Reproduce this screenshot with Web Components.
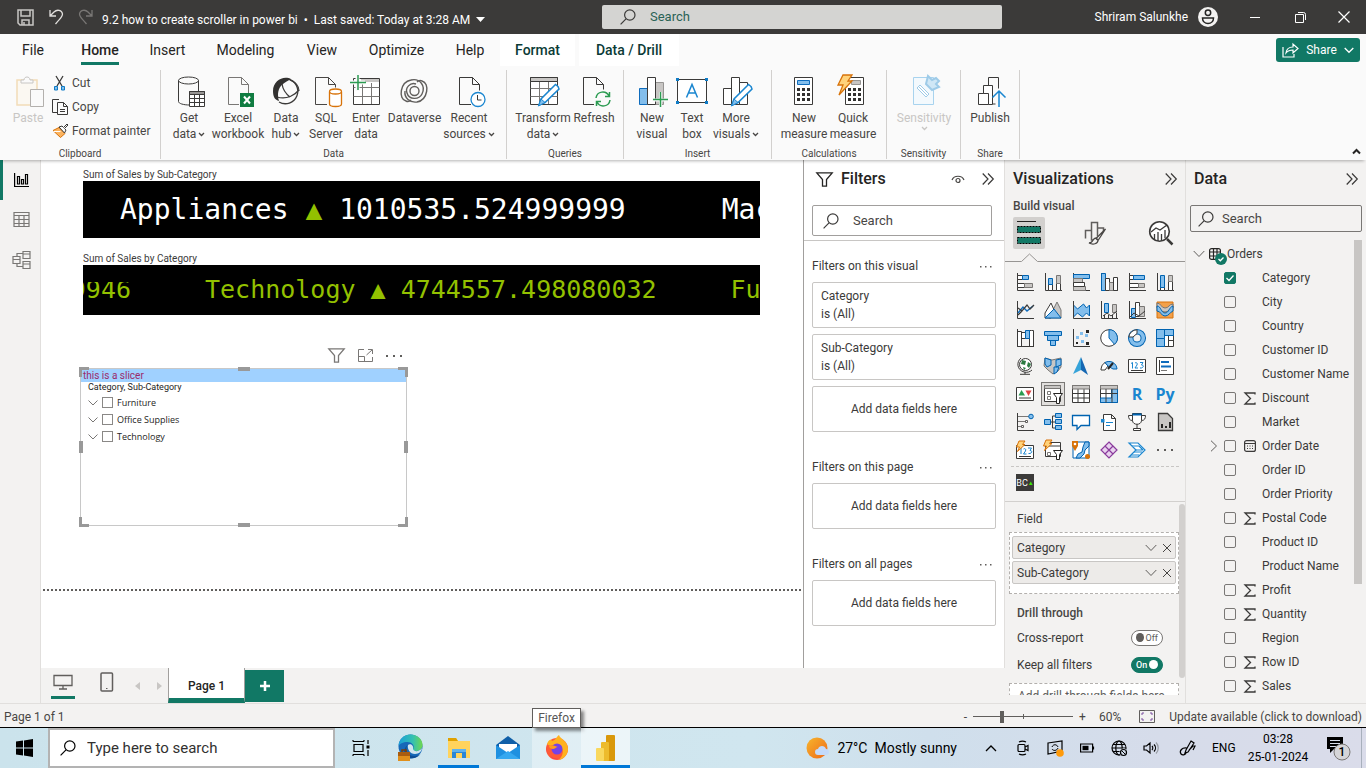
<!DOCTYPE html>
<html lang="en">
<head>
<meta charset="utf-8">
<title>9.2 how to create scroller in power bi</title>
<style>
  html, body { margin: 0; height: 100%; }
  body { font: 12px/16px Roboto, "Segoe UI", sans-serif; color: #3b3a39; background: #f3f2f1; overflow: hidden; }
</style>
</head>
<body>
<pbi-app></pbi-app>
<script>
/* ---------- helpers ---------- */
const BASE = `*{box-sizing:border-box} button{display:flex;align-items:center;font:inherit;color:inherit;background:none;border:0;padding:0;margin:0;cursor:default}
input{font:inherit;color:inherit;margin:0} a{color:inherit;text-decoration:none} [hidden]{display:none}`;
function define(tag, css, html) {
  customElements.define(tag, class extends HTMLElement {
    connectedCallback() {
      if (this.shadowRoot) return;
      const t = document.createElement('template');
      t.innerHTML = `<style>${BASE}${css}</style>` + (typeof html === 'function' ? html(this) : html);
      this.attachShadow({ mode: 'open' }).append(t.content.cloneNode(true));
    }
  });
}
const attr = (el, n, d = '') => el.getAttribute(n) ?? d;

/* ---------- icons: [width, height, markup] ---------- */
const AX = '<path class="d" d="M1.5 0V17.5H18"/>';
const BOLT = '<path d="M3 0h6L6.500 3.500H9L1.500 10.500L3.500 6H.5z" fill="#ffd27a" stroke="#d8730a"/>';
const PENCIL = '<path d="M31 10.500l-2.500-2L14 23l-2 6 6-2.500L32 13z" fill="#fff" stroke="#1a86d0" stroke-width="1.500"/><path d="M14 23l-2.500 7L18 26.500z" fill="#83beec" stroke="#1a86d0"/>';
const ICONS = {
  save: [17, 17, '<g fill="none" stroke="#c8c6c4" stroke-width="1.500"><path d="M1 1h15v15H3L1 14z"/><path d="M4 1v6h9V1M5 16v-5h7v5M7 16v-3"/></g>'],
  undo: [16, 17, '<path d="M2 1v6h6M2 7L6 3C9 0 14 1 14.500 5c0 3-2 4-7 10" fill="none" stroke="#e1dfdd" stroke-width="1.300"/>'],
  redo: [16, 17, '<path d="M14 1v6H8M14 7l-4-4C7 0 2 1 1.500 5c0 3 2 4 7 10" fill="none" stroke="#797775" stroke-width="1.300"/>'],
  caretw: [9, 6, '<path d="M0 0h9L4.500 5z" fill="#fff"/>'],
  mag: [16, 16, '<g fill="none" stroke="currentColor" stroke-width="1.200"><circle cx="9.800" cy="6" r="5.200"/><path d="M6 9.800L.6 15.300"/></g>'],
  user: [20, 20, '<circle cx="10" cy="10" r="10" fill="#f3f2f1"/><g fill="none" stroke="#252423" stroke-width="1.500"><circle cx="10" cy="5.800" r="2.700"/><path d="M4.500 11h11c0 3.500-2.500 5.500-5.500 5.500S4.500 14.500 4.500 11z"/></g>'],
  min: [11, 11, '<path d="M0 5.500h10" stroke="#fff"/>'],
  max: [11, 11, '<g fill="none" stroke="#fff"><path d="M.5 2.500h8v8h-8z"/><path d="M3 .5h5.500a2 2 0 0 1 2 2V8"/></g>'],
  close: [12, 12, '<path d="M.5.5l11 11M11.500.5l-11 11" stroke="#fff" stroke-width="1.200"/>'],
  share: [17, 15, '<g fill="none" stroke="#fff" stroke-width="1.200"><path d="M1 4v10h11v-3"/><path d="M4 10c.5-4 3-6 7-6V1l5 4.500-5 4.500V7c-3 0-5 .5-7 3z"/></g>'],
  chevw: [10, 7, '<path d="M.7 1L5 5.300 9.300 1" fill="none" stroke="#fff" stroke-width="1.300"/>'],
  chev: [7, 5, '<path d="M1 1l2.500 2.500L6 1" fill="none" stroke="currentColor" stroke-width="1.300"/>'],
  up: [9, 7, '<path d="M1 5.500L4.500 2 8 5.500" fill="none" stroke="#252423" stroke-width="2"/>'],
  chevl: [12, 8, '<path d="M.7 1L6 6.500 11.300 1" fill="none" stroke="#605e5c"/>'],
  chevr: [8, 12, '<path d="M1 .7L6.500 6 1 11.300" fill="none" stroke="#605e5c"/>'],
  chevs: [10, 6, '<path d="M.5.5L5 5 9.500.5" fill="none" stroke="#797775"/>'],
  dbl: [12, 12, '<path d="M.7.5L6 6 .7 11.500M6 .5L11.300 6 6 11.500" fill="none" stroke="#3b3a39" stroke-width="1.200"/>'],
  x: [10, 10, '<path d="M1 1l8 8M9 1L1 9" stroke="#484644"/>'],
  dots: [12, 3, '<g fill="#605e5c"><rect y="1" width="1.500" height="1.500"/><rect x="5" y="1" width="1.500" height="1.500"/><rect x="10" y="1" width="1.500" height="1.500"/></g>'],
  dots2: [16, 4, '<g fill="#605e5c"><rect y="1" width="2" height="2"/><rect x="7" y="1" width="2" height="2"/><rect x="14" y="1" width="2" height="2"/></g>'],
  /* ribbon */
  paste: [32, 32, '<path d="M5 4h20v25H5z" fill="#fbf8f2" stroke="#f2dcb8" stroke-width="1.500"/><path d="M9 7V4h3c0-4 6-4 6 0h3v3z" fill="#fafafa" stroke="#c8c6c4"/><path d="M18.500 13.500h13v17h-13z" fill="#fafafa" stroke="#b3b0ad"/>'],
  cut: [14, 16, '<path d="M3 1l6 10M10 1L4 11" stroke="#3b3a39" stroke-width="1.300" fill="none"/><path d="M1.500 11.500h3v3.500h-3zM8.500 11.500h3v3.500h-3z" fill="#83beec" stroke="#0f7bc5"/>'],
  copy: [16, 16, '<g fill="none" stroke="#3b3a39"><path d="M6 13.500H.5V.5H7"/><path d="M5.500 3.500h6l4 4v8h-10zM11.500 3.500v4h4M8 10.500h5M8 12.500h5"/></g>'],
  brush: [17, 16, '<path d="M1 7.500l6-3 6 6-4.500 4z" fill="#fbb35f" stroke="#d8730a"/><path d="M7 4l3-1 1.500 1.500L15 1l1 1-3.500 3.500L14 7l-1.500 3z" fill="#fafafa" stroke="#3b3a39"/><path d="M1.500 8.500h7" stroke="#fff"/>'],
  getdata: [32, 32, '<g class="w"><path d="M5.500 4.500v21c0 2 5 3.500 11 3.500M25.500 4.500V15" fill="none"/><ellipse cx="15.500" cy="4.500" rx="10" ry="3.500" fill="none"/></g><path class="w" d="M16.500 15.500h15v15h-15z"/><path d="M16.500 15.500h15v3h-15z" fill="#979593" stroke="#3b3a39"/><path class="d" d="M16.500 22.500h15M16.500 26.500h15M21.500 19v11M26.500 19v11"/>'],
  excel: [32, 32, '<path d="M6.500 1.500h13l7 7V26M6.500 1.500v27H17M19.500 1.500v7h7" fill="none" stroke="#797775"/><path d="M18 17h14v14H18z" fill="#107c41"/><path d="M22 20.500l6 7M28 20.500l-6 7" stroke="#fff" stroke-width="2"/>'],
  hub: [32, 32, '<g fill="none" stroke="#3b3a39" stroke-width="1.300"><path d="M18 3a12.500 12.500 0 1 1-9 23"/><path d="M12 8c1 6 4 10 8 13M29 14c-4 5-12 10-22 7M20 4c5 2 9 6 9 11"/></g><path d="M21 3C14-1 3 4 3 15c0 6 2 9 6 10-2-7-1-13 4-17 2-2 5-3 8-5z" fill="#323130"/>'],
  sql: [32, 32, '<path d="M5.500 1.500h13l7 7v3M5.500 1.500v27H17M18.500 1.500v7h7" fill="none" stroke="#484644"/><g fill="#fff" stroke="#d8730a" stroke-width="1.300"><path d="M19.500 16v12c0 1.500 2.500 2.500 6 2.500s6-1 6-2.500V16"/><ellipse cx="25.500" cy="15.500" rx="6" ry="2.500"/></g>'],
  enter: [32, 32, '<path class="w" d="M3.500 2.500h26v26h-26z"/><path d="M11 3h18v3H11z" fill="#c8c6c4"/><path d="M3.500 11.500h26M3.500 20.500h26M12.500 7v21M21.500 7v21" fill="none" stroke="#797775"/><path d="M0 6.500h15M7.500 0v15" stroke="#fafafa" stroke-width="4"/><path d="M0 6.500h16M8 -1v15" stroke="#2b9b51" stroke-width="1.500"/>'],
  dataverse: [32, 32, '<g fill="none" stroke="#605e5c" stroke-width="1.400"><circle cx="15.500" cy="15" r="4.500"/><path d="M7 25c-8-2-6-19 5-21 9-2 15 6 11 14-3 6-13 6-15-1-2-5 3-11 9-9"/><path d="M23 5c8 2 6 19-5 21-7 1-13-4-12-11"/><path d="M23 5c-2-1-4 0-5 1M7 25c2 1 4 0 5-1"/></g>'],
  recent: [32, 32, '<path d="M6.500 1.500h13l7 7v6M6.500 1.500v27H18M19.500 1.500v7h7" fill="none" stroke="#3b3a39"/><circle cx="25" cy="23.500" r="7" fill="#fff" stroke="#1a86d0" stroke-width="1.300"/><path d="M24.500 19v5h4" class="d"/>'],
  transform: [32, 32, '<path class="w" d="M3.500 1.500h27v27h-27z"/><path d="M3.500 1.500h27v4h-27z" fill="#c8c6c4" stroke="#3b3a39"/><path d="M3.500 12.500h27M3.500 20.500h27M12.500 6v22M21.500 6v22" fill="none" stroke="#797775"/>' + PENCIL],
  refresh: [32, 32, '<path d="M5.500 1.500h13l7 7v5M5.500 1.500v27H16M18.500 1.500v7h7" fill="none" stroke="#3b3a39"/><g fill="none" stroke="#2b9b51" stroke-width="1.500"><path d="M18 22c1-7 10-8 13-2M32 24c-1 7-10 8-13 2M31.500 16v4.500H27M18.500 30v-4.500H23"/></g>'],
  newvisual: [32, 32, '<path d="M3.500 12.500h8v16h-8z" fill="#83beec" stroke="#0f6cbd"/><path d="M19.500 6.500h8v22h-8z" fill="#c8c6c4" stroke="#979593"/><path class="w" d="M11.500 1.500h8v27h-8z"/><path d="M16 24h16M24.500 16v16" stroke="#fafafa" stroke-width="3"/><path d="M17 23.500h15M24.500 16v15" stroke="#2b9b51" stroke-width="1.500"/>'],
  textbox: [32, 32, '<path class="w" d="M1.500 3.500h29v23h-29z"/><g fill="#0f7bc5"><rect x="0" y="2" width="3" height="3"/><rect x="29" y="2" width="3" height="3"/><rect x="0" y="25" width="3" height="3"/><rect x="29" y="25" width="3" height="3"/></g><path d="M10.500 21.500L16 8.500l5.500 13M12.500 17h7" fill="none" stroke="#1a86d0" stroke-width="1.500"/>'],
  morevisuals: [32, 32, '<path class="w" d="M3.500 12.500h8v16h-8zM11.500 1.500h8v27h-8zM19.500 6.500h8v22h-8z"/>' + PENCIL],
  calc: [32, 32, '<path class="w" d="M6.500 1.500h18v27h-18z"/><path d="M9.500 4.500h12v4h-12z" fill="#83beec" stroke="#0f6cbd"/><g fill="#323130"><path d="M9 12h3v3H9zM14 12h3v3h-3zM19 12h3v3h-3zM9 17h3v3H9zM14 17h3v3h-3zM19 17h3v3h-3zM9 22h3v3H9zM14 22h3v3h-3zM19 22h3v3h-3z"/></g>'],
  quick: [32, 32, '<path class="w" d="M8.500 1.500h18v27h-18z"/><path d="M14.500 4.500h9v4h-9z" fill="#c8c6c4" stroke="#979593"/><g fill="#323130"><path d="M11 12h3v3h-3zM16 12h3v3h-3zM21 12h3v3h-3zM11 17h3v3h-3zM16 17h3v3h-3zM21 17h3v3h-3zM11 22h3v3h-3zM16 22h3v3h-3zM21 22h3v3h-3z"/></g><path d="M6-1h9l-4 6h4L2 19l4-10H1z" fill="#ffd27a" stroke="#d8730a" stroke-width="1.300"/>'],
  sens: [32, 32, '<path d="M5.500 1.500h20v27h-20z" fill="#f3f9fd" stroke="#a8d3ee"/><path d="M9 12l3-3 9 9-3 3zM11 11l8 8" fill="#fff" stroke="#9ecbe8"/><path d="M18 8l6 6 7-3-3-3 3-3-3-3-4 2-4-4z" fill="#cfe7f6" stroke="#9ecbe8" stroke-width="2"/>'],
  publish: [32, 32, '<path class="w" d="M4.500 17.500h10v11h-10z"/><path class="w" d="M9.500 17.500v-8h9v19h-4v-11z"/><path d="M14.500 9V1.500h10v11M18.500 28h3" class="d"/><path d="M25 31V15M18.500 21.500L25 15l6.500 6.500" fill="none" stroke="#1a86d0" stroke-width="1.500"/>'],
  /* left rail */
  report: [16, 16, '<g fill="none" stroke="#000" stroke-width="1.200"><path d="M.6 1v13.500H15"/><path d="M3.500 4.500h2V12h-2zM7.500 7.500h2V12h-2zM11.500 2.500h2V12h-2z"/></g>'],
  table: [18, 18, '<g fill="none" stroke="#797775" stroke-width="1.200"><path d="M1 1.500h15v14H1zM1 4.500h15M1 8.500h15M1 12.500h15M6 4.500v11M11 4.500v11"/></g>'],
  model: [20, 20, '<g fill="none" stroke="#797775" stroke-width="1.200"><path d="M1 6.500h7v7H1zM1 9.500h7M11 1.500h7v7h-7zM11 4h7M11 11.500h7v7h-7zM11 14h7M5 6V3.500h6M5 14v2.500h6"/></g>'],
  /* canvas */
  funnel: [17, 15, '<path d="M.8.8h15.400L10.500 7.500v6.700h-4V7.500z" fill="none" stroke="currentColor" stroke-width="1.300"/>'],
  focus: [15, 14, '<g fill="none" stroke="#797775"><path d="M6 .5H.5v12h14V8M.5 7.500h6v5M14.500 5V.5H10M14 1L8.500 6"/></g>'],
  eye: [14, 10, '<path d="M1 6c2-5 10-5 12 0" fill="none" stroke="#484644" stroke-width="1.200"/><circle cx="7" cy="6.500" r="2" fill="none" stroke="#484644" stroke-width="1.200"/>'],
  /* visual pane heads */
  vbuild: [26, 26, '<path d="M1 1.500h19" stroke="#252423"/><path d="M1.500 6.500h23v6h-23zM1.500 17.500h23v6h-23z" fill="#117865" stroke="#000" stroke-dasharray="2 1"/>'],
  vformat: [24, 26, '<path d="M2.500 18.500v-8h6v-8h6v14M8.500 10v10h4M14.500 8h6v3" fill="none" stroke="#605e5c" stroke-width="1.500"/><path d="M22.500 9L13 18.500l2 2L22.500 9zM13 18c-4 0-2 5-7 5 4 2 9 1 9-3z" fill="#f3f2f1" stroke="#484644" stroke-width="1.300"/>'],
  vanalyt: [26, 26, '<circle cx="11.500" cy="11.500" r="9.800" fill="#fff" stroke="#3b3a39" stroke-width="1.600"/><path d="M3 12l5-4 4 2 7-5M6.500 20v-6M10 21v-9M13.500 21v-7M17 18v-8" fill="none" stroke="#3b3a39" stroke-width="1.300"/><path d="M19 19l5.500 5.500" stroke="#3b3a39" stroke-width="2.500"/>'],
  /* visuals, 18 x 18 */
  v1: [18, 18, AX + '<path class="w" d="M1.500 2.500h5v4h-5zM1.500 10.500h7v4h-7z"/><path class="b" d="M6.500 2.500h6v4h-6z"/><path class="g" d="M8.500 10.500h8v4h-8z"/>'],
  v2: [18, 18, AX + '<path class="w" d="M4.500 10.500h4v7h-4zM12.500 10.500h4v7h-4z"/><path class="b" d="M4.500 5.500h4v6h-4z"/><path class="g" d="M12.500 2.500h4v8h-4z"/>'],
  v3: [18, 18, AX + '<path class="b" d="M1.500 1.500h16v4h-16z"/><path class="g" d="M1.500 5.500h9v4h-9zM1.500 13.500h12v4h-12z"/><path class="w" d="M1.500 9.500h11v4h-11z"/>'],
  v4: [18, 18, AX + '<path class="b" d="M1.500.500h4v17h-4z"/><path class="w" d="M5.500 5.500h4v12h-4z"/><path class="g" d="M9.500 9.500h4v8h-4z"/><path class="w" d="M13.500 4.500h4v13h-4z"/>'],
  v5: [18, 18, AX + '<path class="w" d="M1.500 2.500h4v4h-4zM1.500 10.500h9v4h-9z"/><path class="b" d="M5.500 2.500h11v4h-11z"/><path class="g" d="M10.500 10.500h6v4h-6z"/>'],
  v6: [18, 18, AX + '<path class="w" d="M4.500 12.500h4v5h-4zM12.500 8.500h4v9h-4z"/><path class="b" d="M4.500 2.500h4v12h-4z"/><path class="g" d="M12.500 2.500h4v6h-4z"/>'],
  v7: [18, 18, AX + '<path d="M2 12l5-6 4 4 6-5" fill="none" stroke="#0f6cbd" stroke-width="1.400"/><path d="M2 7l4 3 5-6 3 4 4-4M2 14l4-4" fill="none" stroke="#3b3a39" stroke-width="1.200"/>'],
  v8: [18, 18, '<path class="g" d="M5 17L13 1l4 8v8z"/><path class="w" d="M1 12l6-10 4 9-4 6H1z"/><path class="b" d="M1 17l9-9 7 9z"/>'],
  v9: [18, 18, '<path class="b" d="M1.500 4l4 4 6-5 3 4 3-3v11l-3-3-4 4-5-4-4 4z"/>' + AX],
  v10: [18, 18, AX + '<path class="b" d="M4.500 2.500h4v9h-4z"/><path class="g" d="M12.500 3.500h4v8h-4z"/><path class="d" d="M3 15l4-3 4 3 6-5M4.500 14v3M8.500 14v3M12.500 14v3M16.500 12v5"/>'],
  v11: [18, 18, AX + '<path class="b" d="M3.500 7.500h4v9h-4z"/><path class="w" d="M7.500 1.500h4v14h-4z"/><path class="g" d="M11.500 5.500h5v10h-5z"/><path class="d" d="M2 16l4-4 5 3 6-5"/>'],
  v12: [18, 18, '<path d="M1 1h16v16H1z" fill="#f2a04a" stroke="#d8730a"/><path class="g" d="M1 2c4 0 4 5 8 5s4-4 8-4v4c-3 0-4 4-8 4s-5-4-8-4z"/><path class="b" d="M1 5c4 0 4 7 8 7s4-6 8-7v5c-3 1-4 5-8 5s-4-5-8-5z"/>'],
  v13: [18, 18, '<path class="w" d="M1.500 2.500h4v15h-4zM5.500 3.500h4v6h-4zM15.500 1.500h2v16h-4v-16z"/>' + AX + '<path class="b" d="M9.500 1.500h4v8h-4z"/>'],
  v14: [18, 18, '<path class="b" d="M.5 2.500h17v4H.5zM3.500 6.500h11v5h-11zM6.500 11.500h5v5h-5z"/>'],
  v15: [18, 18, AX + '<g fill="#83beec"><path d="M4 7h3v3H4zM8 3h3v3H8zM13 5h3v3h-3zM9 11h3v3H9z"/></g><g fill="#252423"><path d="M4 13h2v2H4zM14 1h3v3h-3zM14 13h3v3h-3z"/></g>'],
  v16: [18, 18, '<circle class="w" cx="9" cy="9" r="8.300"/><path class="b" d="M9 .7V9l5.500 6.300A8.300 8.300 0 0 0 9 .7z"/>'],
  v17: [18, 18, '<circle cx="9" cy="9" r="6.300" fill="none" stroke="#0063b1" stroke-width="5.500"/><circle cx="9" cy="9" r="6.300" fill="none" stroke="#83beec" stroke-width="3.500"/><path d="M9 .8A8.200 8.200 0 0 0 .8 8H5l4-3.500z" class="w"/>'],
  v18: [18, 18, '<path class="w" d="M.5.5h17v17H.5zM8.500 6.500h9M12.500 6.500v11M12.500 11.500h5"/><path class="b" d="M.5.5h8v9h-8zM.5 9.500h8v8h-8zM8.500.5h9v6h-9z"/>'],
  v19: [18, 18, '<circle cx="9.500" cy="7.500" r="6" fill="#fff" stroke="#3b3a39"/><path d="M6 3l4 1-1 4-4-1zM12 5l3 2-2 4-2-2zM7 10l3 1-2 2z" fill="#2b7b41"/><path d="M5 1C0 5 1 13 8 15c3 .8 6 0 8-2M9 15v2M4 17.300h10" class="d"/>'],
  v20: [18, 18, '<path class="g" d="M1 1l7 2 9-2v9l-3 4-5 3-5-4-4-4z"/><path class="b" d="M1 1l6 2v5l-4 2-2-3zM12 3l5-1v6l-5 2zM10 10h5l-2 5-3 2z"/>'],
  v21: [18, 18, '<path d="M9 0L1 17l8-4z" fill="#36a3d9"/><path d="M9 0l7 18-7-5z" fill="#1567b2"/>'],
  v22: [18, 18, '<path class="w" d="M1 12a8 8 0 0 1 4-6.500L8 9l-3 4H1z"/><path class="b" d="M5 5.500A8 8 0 0 1 17 12h-4l-5-3z"/><path d="M13 6l-5 6" stroke="#252423" stroke-width="2"/>'],
  v23: [18, 18, '<path class="w" d="M.5 2.500h17v13H.5zM3 13.500h12"/><path d="M3 6.500l1.500-1v6M7 6c1-1 3 0 2 2l-2 3h3M12 5.500h3L13.500 8c3 0 2 3.500-1.500 3" fill="none" stroke="#1a86d0"/>'],
  v24: [18, 18, '<path class="w" d="M.5.5h17v17H.5z"/><path d="M3.500 3v12" class="d"/><path d="M5 5h8M5 9.500h10" stroke="#0f6cbd" stroke-width="2"/><path d="M5 13.500h6" stroke="#797775"/>'],
  v25: [18, 18, '<path class="w" d="M.5 2.500h17v13H.5zM3 13h12"/><path d="M5.500 5L9 10.500H2.500z" fill="#2b9b51"/><path d="M9.500 5.500h6L12.500 11z" fill="#e04343"/>'],
  v26: [22, 22, '<path class="w" d="M2.500 2.500h16v16h-16z"/><path class="g" d="M2.500 2.500h16v3h-16z"/><path d="M5.500 8.500h3v3h-3zM5.500 13.500h3v3h-3z" fill="#fff" stroke="#797775"/><path d="M11.500 10.500h9l-3 4v6h-3v-6z" fill="#fff" stroke="#252423"/>'],
  v27: [18, 18, '<path class="w" d="M.5.500h17v17H.5zM.5 8.500h17M.5 13h17M6 4v13.500M12 4v13.500"/><path class="g" d="M.5.500h17v3.500H.5z"/>'],
  v28: [18, 18, '<path class="w" d="M.5.500h17v17H.5z"/><path class="b" d="M.5 13h11V4h6v13.500H.5z"/><path class="g" d="M.5.500h17v3.500H.5z"/><path class="d" d="M.5 8.500h17M6 4v13.500M12 4v13.500"/>'],
  v31: [18, 18, AX + '<path d="M2 3.500h11M2 8.500h7M2 13.500h4" stroke="#797775"/><circle cx="15" cy="3.500" r="2.300" class="b"/><path d="M9.500 7.500h2v2h-2zM5.500 12.500h2v2h-2z" fill="#fff" stroke="#605e5c"/>'],
  v32: [18, 18, '<path d="M6 9h5M8.500 9V3H12M8.500 9v6H12" class="d"/><path class="b" d="M.5 6.500h6v5h-6zM11.500.5h6v4h-6zM11.500 6.500h6v4h-6zM11.500 12.500h6v4h-6z"/>'],
  v33: [18, 18, '<path d="M.5 2.500h17v10H9l-4 4v-4H.5z" fill="#fff" stroke="#0063b1" stroke-width="1.300"/>'],
  v34: [18, 18, '<path class="w" d="M3.500 1.500h8l4 4v12h-12zM11.500 1.500v4h4"/><path d="M6 9.500h7M6 12.500h4" stroke="#1a86d0"/><path d="M1 6h3.500v3.500H1z" fill="#1a86d0"/>'],
  v35: [18, 18, '<path class="w" d="M4.500.5h9v7c0 5-9 5-9 0zM4.500 2.500h-4c0 3 1 5 4 5M13.500 2.500h4c0 3-1 5-4 5M9 11v4M5.500 17.500v-2h7v2z"/><path d="M4.500 1.500h9" stroke="#0063b1" stroke-width="2"/>'],
  v36: [18, 18, '<path d="M2.500.5h9l5 5v12h-14z" fill="#c8c6c4" stroke="#3b3a39" stroke-width="1.300"/><path d="M5 11h2v4H5zM9 13h2v2H9zM13 9h2v6h-2z" fill="#252423"/>'],
  v37: [18, 18, '<path class="w" d="M.5 4.500h17v13H.5zM3 15.500h12"/><path d="M5 7v6M7.500 8c1-1 3 0 2 2l-2 3h3M12 7h3.500L14 9.500c3 0 2 3.500-1.500 3" fill="none" stroke="#1a86d0"/>' + BOLT],
  v38: [20, 20, '<path class="w" d="M2.500 2.500h15v14h-15zM2.500 6h15"/><path d="M4.500 12.500h3v3h-3z" fill="#fff" stroke="#797775"/><path d="M10.500 10.500h9l-3 4v5h-3v-5z" fill="#fff" stroke="#252423"/>' + BOLT],
  v39: [18, 18, '<path d="M1 1h16v16H1z" fill="#fff" stroke="#0063b1"/><path d="M13 1h4v4l-4 4-1 4-4 4H4l2-4 4-2 1-5z" class="b"/><path d="M0 0h6v5l-3 5-3-5z" fill="#d8730a"/><circle cx="3" cy="3" r="1.300" fill="#fff"/><circle cx="15.500" cy="15.500" r="2.500" fill="#d8730a"/>'],
  v40: [18, 18, '<g fill="#e8d2ee" stroke="#8a3a9c" stroke-width="1.200"><path d="M9 1l4 4-4 4-4-4zM5 5l4 4-4 4-4-4zM13 5l4 4-4 4-4-4zM9 9l4 4-4 4-4-4z"/></g>'],
  v41: [18, 18, '<g fill="#fff" stroke="#1a86d0" stroke-width="1.200"><path d="M1 2h9l7 7-7 7H1l7-7z"/><path d="M4 5h7l4 4M8 9h7M6 11h8M3 14h8"/></g>'],
  /* data pane */
  grid: [12, 12, '<g fill="none" stroke="#252423" stroke-width="1.200"><rect x=".6" y=".6" width="10.800" height="10.800" rx="2"/><path d="M4.500 1v10M8 1v10M1 4h10M1 8h10"/></g>'],
  okdot: [12, 12, '<circle cx="6" cy="6" r="6" fill="#117865"/><path d="M3.500 6L5.300 7.800 8.500 4.500" fill="none" stroke="#fff" stroke-width="1.300"/>'],
  sigma: [12, 13, '<path d="M11 2.500V1H1l5.500 5.500L1 12h10v-1.500" fill="none" stroke="#3b3a39" stroke-width="1.300"/>'],
  cal: [12, 12, '<rect x=".6" y=".6" width="10.800" height="10.800" rx="2" fill="none" stroke="#3b3a39" stroke-width="1.200"/><path d="M1 3.500h10" stroke="#3b3a39"/><path d="M3 6h1M5.500 6h1M8 6h1M3 8.500h1M5.500 8.500h1M8 8.500h1" stroke="#3b3a39"/>'],
  /* page tabs and status */
  desktop: [20, 16, '<path d="M1 1.500h18v10H1zM10 12v3M6 15h8" fill="none" stroke="#605e5c" stroke-width="1.300"/>'],
  phone: [14, 20, '<rect x="1" y="1" width="11.500" height="18" rx="1" fill="none" stroke="#605e5c" stroke-width="1.500"/><path d="M6 16.500h1.500" stroke="#605e5c"/>'],
  tril: [5, 8, '<path d="M5 0v8L0 4z" fill="#c8c6c4"/>'],
  trir: [5, 8, '<path d="M0 0v8l5-4z" fill="#c8c6c4"/>'],
  plus: [12, 12, '<path d="M6 1v10M1 6h10" stroke="#fff" stroke-width="2.500"/>'],
  fit: [16, 13, '<path d="M.5.5h15v12H.5z" fill="none" stroke="#605e5c"/><path d="M3 5V3h2M11 3h2v2M13 8v2h-2M5 10H3V8" fill="none" stroke="#7b4fa0"/>'],
  /* taskbar */
  win: [17, 18, '<path d="M0 2.500L7 1.500V8.500H0zM8 1.400L17 0v8.500H8zM0 9.500h7v7L0 15.500zM8 9.500h9V18L8 16.600z"/>'],
  tview: [18, 18, '<g fill="none" stroke="#000" stroke-width="1.200"><path d="M2 5.500h9v7H2zM1 2.500V1M12 2.500h-11M1 15.500h11M1 17v-1.500M12 17v-1.500M12 1v1.500M16 1v4M16 11v6"/></g><path d="M14.500 6.500h3v3h-3z"/>'],
  edge: [26, 28, '<defs><linearGradient id="e" x1="0" x2="1"><stop stop-color="#1a9fd8"/><stop offset=".6" stop-color="#35c1b0"/><stop offset="1" stop-color="#6fd84e"/></linearGradient></defs><circle cx="13.500" cy="12.500" r="12" fill="#1668b8"/><path d="M1.500 12C2 5 7 .5 13.500.5S25.500 5 25.500 11c0 5-5 7-9 5.500-1-.5-.5-1.500 0-2.500 1-3-2-6-6-6-4.500 0-8 2-9 4z" fill="url(#e)"/><path d="M10.500 11c-3 5 0 11 7 11 3 0 5-1 6-2-3 4-8 5-11 4-6-1-7-9-2-13z" fill="#0d4c94"/><path d="M11 11c2-2 6 0 5 4 1 3 6 3 9-1 0 3-3 6-7 6-5 0-8-5-7-9z" fill="#cfe5ee"/><path d="M1 18h12v9H1z" fill="#e08f1b"/><path d="M1 18h12v4H1z" fill="#a85c10"/><path d="M5 18v-2h4v2" fill="none" stroke="#7a3f08" stroke-width="1.500"/>'],
  files: [24, 22, '<path d="M1 1h8l2 3h12v17H1z" fill="#ffd35c"/><path d="M1 1h8l2 3H1z" fill="#e0a100"/><path d="M5 21v-9h14v9h-4v-5H9v5z" fill="#2a86d6"/><path d="M5 12h14v3H5z" fill="#5eb2ee"/>'],
  mail: [26, 26, '<path d="M1 10l12-9 12 9v14H1z" fill="#0f5fa8"/><path d="M4 9h18v8l-9 5-9-5z" fill="#fff"/><path d="M1 10l12 8 12-8v14H1z" fill="#1e90e0"/><path d="M1 24l12-8 12 8z" fill="#35a8f0"/>'],
  firefox: [26, 26, '<circle cx="13" cy="14" r="11" fill="#ff5a36"/><path d="M3 9C5 4 7 4 8 6c4-1 4-4 7-6 1 4 9 6 9 14 0 5-4 10-9 11 8-9 2-15-3-15-4 0-6 2-9-1z" fill="#ffb21e"/><path d="M2 12c1 9 7 13 13 12-8 0-13-5-13-12z" fill="#f0315e"/><circle cx="13" cy="14" r="5.500" fill="#7542e5"/><path d="M5 11c4-1 6 0 9 1-2 0-3 2-5 2s-4-1-4-3z" fill="#ff9a1e"/>'],
  pbi: [20, 26, '<rect x="10" y="0" width="9" height="26" rx="1" fill="#d9980b"/><rect x="5" y="7" width="8" height="19" rx="1" fill="#edbb2c"/><rect x="0" y="13" width="8" height="13" rx="1" fill="#f9d85e"/>'],
  sun: [24, 24, '<defs><linearGradient id="s" x1="0" x2="1" y2="1"><stop stop-color="#f7b52c"/><stop offset="1" stop-color="#ee6a1a"/></linearGradient></defs><circle cx="11" cy="12" r="10.500" fill="url(#s)"/><path d="M12 19a3 3 0 0 1 0-6c1-4 7-4 8 0 4 0 4 6 0 6z" fill="#c3dafb"/>'],
  tup: [12, 8, '<path d="M1 7l5-5 5 5" fill="none" stroke="#000" stroke-width="1.300"/>'],
  cam: [12, 16, '<g fill="none" stroke="#000" stroke-width="1.200"><rect x="1" y="4.500" width="7" height="7" rx="1"/><path d="M8 7l3-1.500v5L8 9M2 2c2-1 5-1 7 0M2 14c2 1 5 1 7 0"/></g>'],
  sync: [17, 18, '<path d="M1 4l14-2v10l-14 3z" fill="none" stroke="#000" stroke-width="1.200"/><path d="M5 8c1-3 5-3 6 0M11 9c-1 3-5 3-6 1" fill="none" stroke="#000"/><circle cx="13" cy="14" r="3.800" fill="#ff9a0a"/>'],
  batt: [15, 10, '<path d="M.6 1h12v8H.6zM13.500 3.500v3" fill="none" stroke="#000" stroke-width="1.200"/><path d="M2.500 2.800h6v4.400h-6z"/>'],
  globe: [17, 17, '<g fill="none" stroke="#000" stroke-width="1.200"><circle cx="8" cy="8" r="7"/><ellipse cx="8" cy="8" rx="3.200" ry="7"/><path d="M1 8h14M2 4.500h12M2 11.500h7"/></g><circle cx="12.500" cy="12.500" r="4" fill="#d5dfec"/><circle cx="12.500" cy="12.500" r="3" fill="none" stroke="#000" stroke-width="1.200"/><path d="M10.500 10.500l4 4" stroke="#000"/>'],
  vol: [17, 14, '<g fill="none" stroke="#000" stroke-width="1.200"><path d="M1 5h2.500L7 2v10L3.500 9H1zM9 5c1 1 1 3 0 4M11 3.500c2 2 2 5 0 7"/><path d="M13 1.500c3 3 3 8 0 11" stroke="#979ba2"/></g>'],
  pen: [17, 17, '<g fill="none" stroke="#000" stroke-width="1.200"><path d="M12 1l3 2-6 9-3 1 1-3zM8 8c-5-1-8 3-6 6 2 2 5 0 5-1M10 10l4-4 2 0-2 4"/></g>'],
  note: [24, 24, '<path d="M1 1h16v12h-9l-4 4v-4H1z"/><path d="M4 4.500h10M4 7.500h10M4 10.500h7" stroke="#d8dde9"/><circle cx="16" cy="16" r="8" fill="#d5d5d8" stroke="#797775"/>']
};
define('pbi-icon', `:host{display:inline-flex;flex:none} svg{display:block;overflow:visible}
.d{fill:none;stroke:#3b3a39}.w{fill:#fff;stroke:#3b3a39}.b{fill:#83beec;stroke:#0063b1}.g{fill:#c8c6c4;stroke:#797775}`,
  el => { const [w, h, m] = ICONS[attr(el, 'name')]; return `<svg width="${w}" height="${h}" viewBox="0 0 ${w} ${h}" aria-hidden="true">${m}</svg>`; });

/* ---------- title bar ---------- */
define('title-bar', `
:host{display:flex;align-items:center;height:34px;background:#3b3a39;color:#fff;flex:none}
.left{display:flex;align-items:center;width:602px;padding-left:17px;gap:14px;flex:none}
.name{display:flex;align-items:center;gap:6px;white-space:nowrap;padding-top:6px;margin-left:-6px}
.search{display:flex;align-items:center;gap:12px;width:400px;height:24px;background:#d4d4d2;border-radius:2px;padding-left:18px;color:#3b3a39}
.search input{border:0;background:none;outline:0;flex:1;min-width:0;font-size:13px}
.search input::placeholder{color:#2a6355;opacity:1}
.right{display:flex;align-items:center;flex:1;justify-content:flex-end;padding-right:16px}
.u{margin:0 32px 0 10px}.m{margin-right:34px}.x{margin-right:32px}`,
`<div class="left"><button aria-label="Save"><pbi-icon name="save"></pbi-icon></button><button aria-label="Undo"><pbi-icon name="undo"></pbi-icon></button><button aria-label="Redo"><pbi-icon name="redo"></pbi-icon></button>
<div class="name"><span>9.2 how to create scroller in power bi</span><span>•</span><span>Last saved: Today at 3:28 AM</span><pbi-icon name="caretw"></pbi-icon></div></div>
<label class="search"><pbi-icon name="mag"></pbi-icon><input type="text" placeholder="Search" aria-label="Search"></label>
<div class="right"><span>Shriram Salunkhe</span><pbi-icon class="u" name="user"></pbi-icon><button class="m" aria-label="Minimize"><pbi-icon name="min"></pbi-icon></button><button class="x" aria-label="Restore"><pbi-icon name="max"></pbi-icon></button><button aria-label="Close"><pbi-icon name="close"></pbi-icon></button></div>`);

/* ---------- ribbon ---------- */
define('ribbon-tab', `
:host{display:flex;justify-content:center;height:32px;width:var(--w,64px);flex:none;font-size:14px;color:#252423}
:host([extra]){background:#fff;margin-right:4px;font-weight:500;color:#0b3b36}
:host([on]){font-weight:500;color:#252423}
button{height:31px;padding-top:4px;border-bottom:3px solid transparent;white-space:nowrap}
:host([on]) button{border-color:#117865}`, `<button role="tab"><slot></slot></button>`);
define('ribbon-tabs', `
:host{display:flex;align-items:flex-start;height:36px;padding:0 6px 0 1px;background:#fafafa;flex:none}
.share{margin:4px 0 0 auto;height:24px;width:84px;background:#117865;border-radius:3px;color:#fff;justify-content:center;gap:7px}`,
`<slot></slot><button class="share"><pbi-icon name="share"></pbi-icon><span>Share</span><pbi-icon name="chevw"></pbi-icon></button>`);
define('ribbon-group', `
:host{display:flex;flex-direction:column;width:var(--w);height:89px;flex:none;border-right:1px solid #d2d0ce}
.items{display:flex;flex:1;padding:6px 0 0 var(--p,0px)}
.cap{font-size:10px;line-height:11px;text-align:center;color:#484644}`,
el => `<div class="items"><slot></slot></div><div class="cap">${attr(el, 'label')}</div>`);
define('ribbon-button', `
:host{display:block;width:var(--w,48px);flex:none;color:#484644}
:host([off]){color:#c8c6c4}
button{flex-direction:column;width:100%;height:66px}
.l1{margin-top:2px}span{white-space:nowrap;line-height:16px;display:flex;align-items:center;gap:2px}`,
el => `<button ${el.hasAttribute('off') ? 'disabled' : ''}><pbi-icon name="${attr(el, 'icon')}"></pbi-icon><span class="l1"><slot></slot></span><span>${attr(el, 'second')}${el.hasAttribute('menu') ? '<pbi-icon name="chev"></pbi-icon>' : ''}</span></button>`);
define('ribbon-small', `:host{display:block;height:24px;color:#484644}
button{gap:4px;height:24px;white-space:nowrap} i{width:16px;display:flex;justify-content:center}`,
el => `<button><i><pbi-icon name="${attr(el, 'icon')}"></pbi-icon></i><slot></slot></button>`);
define('ribbon-bar', `
:host{display:flex;background:#fafafa;height:90px;flex:none;box-shadow:0 3px 3px -2px rgba(0,0,0,.3);z-index:2}
.stack{display:flex;flex-direction:column;margin-top:-5px}
.fold{margin:auto 5px 5px auto}`, () => {
  const b = (w, icon, a, s = '', x = '') => `<ribbon-button style="--w:${w}px" icon="${icon}" second="${s}" ${x}>${a}</ribbon-button>`;
  const g = (w, p, l, c) => `<ribbon-group style="--w:${w}px;--p:${p}px" label="${l}">${c}</ribbon-group>`;
  return g(161, 4, 'Clipboard', b(48, 'paste', 'Paste', '', 'off') + `<div class="stack"><ribbon-small icon="cut">Cut</ribbon-small><ribbon-small icon="copy">Copy</ribbon-small><ribbon-small icon="brush">Format painter</ribbon-small></div>`)
  + g(346, 4, 'Data', b(48, 'getdata', 'Get', 'data', 'menu') + b(50, 'excel', 'Excel', 'workbook') + b(46, 'hub', 'Data', 'hub', 'menu') + b(34, 'sql', 'SQL', 'Server') + b(46, 'enter', 'Enter', 'data') + b(51, 'dataverse', 'Dataverse') + b(58, 'recent', 'Recent', 'sources', 'menu'))
  + g(117, 10, 'Queries', b(52, 'transform', 'Transform', 'data', 'menu') + b(50, 'refresh', 'Refresh'))
  + g(148, 10, 'Insert', b(36, 'newvisual', 'New', 'visual') + b(44, 'textbox', 'Text', 'box') + b(44, 'morevisuals', 'More', 'visuals', 'menu'))
  + g(115, 8, 'Calculations', b(48, 'calc', 'New', 'measure') + b(50, 'quick', 'Quick', 'measure'))
  + g(74, 10, 'Sensitivity', b(54, 'sens', 'Sensitivity', '', 'off menu'))
  + g(59, 5, 'Share', b(48, 'publish', 'Publish'))
  + `<button class="fold" aria-label="Collapse the ribbon"><pbi-icon name="up"></pbi-icon></button>`;
});

/* ---------- left rail ---------- */
define('nav-rail', `
:host{display:flex;flex-direction:column;width:41px;flex:none;border-right:1px solid #e1dfdd}
button{height:40px;justify-content:center;border-left:3px solid transparent}
.on{border-color:#117865}`,
`<button class="on" aria-label="Report view"><pbi-icon name="report"></pbi-icon></button><button aria-label="Table view"><pbi-icon name="table"></pbi-icon></button><button aria-label="Model view"><pbi-icon name="model"></pbi-icon></button>`);

/* ---------- canvas visuals ---------- */
define('ticker-visual', `
:host{display:block;margin:0 43px 14px 42px}
h3{margin:0;font-size:10px;line-height:13px;font-weight:400;color:#3b3a39}
.tape{display:flex;align-items:center;height:var(--h);background:#000;overflow:hidden;white-space:nowrap;font-family:"DejaVu Sans Mono",monospace}`,
el => `<h3>${attr(el, 'label')}</h3><div class="tape"><slot></slot></div>`);
define('slicer-item', `:host{display:block;height:17px}
label{display:flex;align-items:center;height:17px;font-family:"Open Sans",sans-serif;font-size:9px;color:#252423}
input{appearance:none;width:11px;height:11px;border:1px solid #8a8886;background:#fff;margin:0 4px}`,
`<label><pbi-icon name="chevs"></pbi-icon><input type="checkbox"><slot></slot></label>`);
define('slicer-visual', `
:host{display:block;position:relative;width:327px;height:158px;border:1px solid #c8c8c8;margin-left:39px}
h3{margin:0;background:#a0d1ff;color:#9b2a6b;font-size:10px;line-height:13px;font-weight:400;padding-left:2px}
.sub{font-size:9px;line-height:10px;padding-left:7px;color:#252423}
.list{padding:2px 0 0 7px}
.h{position:absolute;border:0 solid #999}
.tl{left:-2px;top:-2px;border-width:3px 0 0 3px}.tr{right:-2px;top:-2px;border-width:3px 3px 0 0}
.bl{left:-2px;bottom:-2px;border-width:0 0 3px 3px}.br{right:-2px;bottom:-2px;border-width:0 3px 3px 0}
.c{width:10px;height:10px}.hz{width:12px;height:4px;background:#999;left:157px}.vt{width:4px;height:12px;background:#999;top:72px}
.t{top:-2px}.b{bottom:-2px}.l{left:-2px}.r{right:-2px}`,
`<h3>this is a slicer</h3><div class="sub">Category, Sub-Category</div><div class="list"><slot></slot></div>
<span class="h c tl"></span><span class="h c tr"></span><span class="h c bl"></span><span class="h c br"></span><span class="h hz t"></span><span class="h hz b"></span><span class="h vt l"></span><span class="h vt r"></span>`);
define('report-canvas', `
:host{display:block;flex:1;min-width:0;background:#fff;padding-top:8px;overflow:hidden}
.a{font-size:28px;color:#fff;padding-left:37px;flex:none}.a i,.g{font-style:normal;color:#93c100}
.a b{font-weight:400;padding-left:96px}
.g{font-size:25px;display:flex}.cut{display:flex;justify-content:flex-end;width:48px;overflow:hidden}.mid{padding:0 74px 0 74px}
.tools{display:flex;gap:13px;align-items:center;color:#797775;width:361px;justify-content:flex-end;height:15px;margin:33px 0 5px}
.end{border-top:2px dotted #605e5c;margin:63px 2px 0 2px}`,
`<ticker-visual label="Sum of Sales by Sub-Category" style="--h:57px"><span class="a">Appliances <i>▲</i> 1010535.524999999<b>Machines</b></span></ticker-visual>
<ticker-visual label="Sum of Sales by Category" style="--h:50px"><span class="g"><span class="cut">9946</span><span class="mid">Technology ▲ 4744557.498080032</span>Furniture</span></ticker-visual>
<div class="tools"><pbi-icon name="funnel"></pbi-icon><pbi-icon name="focus"></pbi-icon><pbi-icon name="dots2"></pbi-icon></div>
<slicer-visual><slicer-item>Furniture</slicer-item><slicer-item>Office Supplies</slicer-item><slicer-item>Technology</slicer-item></slicer-visual>
<div class="end"></div>`);

/* ---------- filters ---------- */
define('pane-head', `:host{display:flex;align-items:center;height:22px;gap:17px}
h2{margin:0;flex:1;font-size:16px;line-height:22px;font-weight:500;color:#252423;display:flex;align-items:center;gap:8px}`,
`<h2><slot></slot></h2><slot name="tool"></slot><button aria-label="Collapse pane"><pbi-icon name="dbl"></pbi-icon></button>`);
define('filter-card', `:host{display:block;height:46px;border:1px solid #c8c6c4;border-radius:2px;background:#fff;padding:4px 8px;margin-bottom:6px;line-height:18px;box-sizing:border-box}
:host([drop]){padding:0;line-height:44px;text-align:center}`, `<slot></slot>`);
define('filter-section', `:host{display:block;margin-bottom:27px}
header{display:flex;justify-content:space-between;align-items:center;height:16px;margin-bottom:8px;padding-right:4px}`,
el => `<header><span>${attr(el, 'label')}</span><button aria-label="More options"><pbi-icon name="dots"></pbi-icon></button></header><slot></slot>`);
define('filters-pane', `
:host{display:block;width:202px;flex:none;background:#fff;border-left:1px solid #a19f9d;border-right:1px solid #e1dfdd;box-sizing:border-box}
.top{padding:8px 12px 4px 8px;border-bottom:1px solid #c8c6c4}
pane-head{margin:0 -2px 0 4px}
.search{display:flex;align-items:center;height:31px;border:1px solid #a19f9d;border-radius:2px;margin-top:15px;padding-left:10px;gap:12px}
.search input{border:0;outline:0;flex:1;min-width:0;background:none;font-size:13px}.search input::placeholder{color:#484644;opacity:1}
.body{padding:17px 8px 0 8px}`,
`<div class="top"><pane-head><pbi-icon name="funnel"></pbi-icon>Filters<pbi-icon slot="tool" name="eye"></pbi-icon></pane-head>
<label class="search"><pbi-icon name="mag"></pbi-icon><input type="text" placeholder="Search" aria-label="Search filters"></label></div>
<div class="body"><filter-section label="Filters on this visual"><filter-card>Category<br>is (All)</filter-card><filter-card>Sub-Category<br>is (All)</filter-card><filter-card drop>Add data fields here</filter-card></filter-section>
<filter-section label="Filters on this page"><filter-card drop>Add data fields here</filter-card></filter-section>
<filter-section label="Filters on all pages"><filter-card drop>Add data fields here</filter-card></filter-section></div>`);

/* ---------- page tabs ---------- */
define('page-tabs', `
:host{display:flex;align-items:stretch;height:35px;flex:none;background:#f3f2f1}
button{justify-content:center}
.v{width:24px;border-bottom:3px solid transparent;height:31px}.v.on{border-color:#117865}
.views{display:flex;gap:20px;padding-left:10px;width:85px}
.nav{display:flex;gap:17px;padding:0 6px 0 9px}
.page{width:77px;background:#fff;border:solid #a19f9d;border-width:0 1px 0 1px;border-bottom:5px solid #117865;color:#252423;font-weight:500;padding-top:5px}
.add{width:39px;height:32px;margin-top:2px;background:#117865}`,
`<div class="views"><button class="v on" aria-label="Desktop layout"><pbi-icon name="desktop"></pbi-icon></button><button class="v" aria-label="Mobile layout"><pbi-icon name="phone"></pbi-icon></button></div>
<div class="nav"><button aria-label="Previous"><pbi-icon name="tril"></pbi-icon></button><button aria-label="Next"><pbi-icon name="trir"></pbi-icon></button></div>
<button class="page">Page 1</button><button class="add" aria-label="New page"><pbi-icon name="plus"></pbi-icon></button>`);

/* ---------- visualizations ---------- */
define('field-pill', `:host{display:flex;align-items:center;height:23px;margin-bottom:2px;border:1px solid #c8c6c4;border-radius:2px;background:#edebe9;padding:0 3px 0 4px;gap:5px;box-sizing:border-box}
span{flex:1}`, `<span><slot></slot></span><button aria-label="Field menu"><pbi-icon name="chevl"></pbi-icon></button><button aria-label="Remove field"><pbi-icon name="x"></pbi-icon></button>`);
define('toggle-switch', `:host{display:block}
label{display:flex;align-items:center;justify-content:space-between;height:27px}
.sw{display:flex;align-items:center;width:32px;height:16px;border:1px solid #797775;border-radius:8px;background:#fff;padding:0 4px;gap:2px;font-size:9px;color:#605e5c}
.sw input{appearance:none;width:9px;height:9px;border-radius:50%;background:#605e5c}
.sw.on{background:#117865;border-color:#117865;color:#fff;flex-direction:row-reverse;font-weight:500}.sw.on input{background:#fff}`,
el => { const on = el.hasAttribute('on'); return `<label><slot></slot><span class="sw${on ? ' on' : ''}"><input type="checkbox" role="switch" ${on ? 'checked' : ''}>${on ? 'On' : 'Off'}</span></label>`; });
define('visuals-pane', `
:host{display:flex;flex-direction:column;width:181px;flex:none;border-right:1px solid #e1dfdd;overflow:hidden;box-sizing:border-box}
pane-head{margin:8px 8px 0 8px}
.sub{padding:8px 8px 3px;font-weight:500;color:#484644}
.modes{display:flex;justify-content:space-between;padding:0 8px 0 8px;height:32px}
.modes button{width:32px;height:32px;justify-content:center;border-radius:2px}
.modes .on{background:#d2d0ce}
.rule{display:block;height:10px;width:100%;margin-top:4px;flex:none}
.grid{display:grid;grid-template-columns:repeat(6,28px);grid-auto-rows:28px;padding:5px 0 0 6px}
.grid button{justify-content:center;width:24px;height:24px;margin:2px;font:700 16px/20px "Open Sans",sans-serif;color:#1a86d0}
.grid .sel{background:#e1dfdd;border:1px solid #797775}
.custom{border-top:1px dashed #c8c6c4;margin:2px 6px 0;padding:7px 0 10px 5px}
.abc{width:18px;height:17px;background:#3b3a39;color:#fff;font-size:9px;justify-content:center;overflow:hidden}.abc i{color:#3fe800;font-style:normal;font-size:6px}
.wells{display:flex;flex:1;min-height:0;border-top:1px solid #d2d0ce;padding-top:2px;overflow:hidden;margin-bottom:8px}
.in{flex:1;min-width:0;padding:7px 0 0 4px}
.lab{padding:0 8px}.box{border:1px dashed #b3b0ad;background:#fff;padding:3px 2px 0;margin:5px 0 11px;height:62px}
h4{margin:0;font-size:12px;font-weight:500;padding:0 8px 3px;color:#484644}
toggle-switch{padding:0 16px 0 8px}
.drop{margin-top:5px;height:24px;padding:4px 8px;color:#605e5c;white-space:nowrap;overflow:hidden}
.bar{width:6px;height:174px;background:#d2d0ce;border-radius:3px;flex:none}`, () => {
  const cells = [];
  for (let i = 1; i <= 41; i++) {
    if (i === 29) cells.push('<button>R</button>');
    else if (i === 30) cells.push('<button>Py</button>');
    else cells.push(`<button ${i === 26 ? 'class="sel"' : ''} aria-label="Visual ${i}"><pbi-icon name="v${i}"></pbi-icon></button>`);
  }
  return `<pane-head>Visualizations</pane-head><div class="sub">Build visual</div>
<div class="modes"><button class="on" aria-label="Build"><pbi-icon name="vbuild"></pbi-icon></button><button aria-label="Format"><pbi-icon name="vformat"></pbi-icon></button><button aria-label="Analytics"><pbi-icon name="vanalyt"></pbi-icon></button></div>
<svg class="rule" viewBox="0 0 180 10" aria-hidden="true"><path d="M0 8.500h16.500l8-7.500 8 7.500H180" fill="none" stroke="#979593"/></svg>
<div class="grid">${cells.join('')}<button aria-label="More visuals"><pbi-icon name="dots2"></pbi-icon></button></div>
<div class="custom"><button class="abc" aria-label="Scroller">BC<i>▲</i></button></div>
<div class="wells"><div class="in"><div class="lab">Field</div><div class="box"><field-pill>Category</field-pill><field-pill>Sub-Category</field-pill></div>
<h4>Drill through</h4><toggle-switch>Cross-report</toggle-switch><toggle-switch on>Keep all filters</toggle-switch><div class="box drop">Add drill-through fields here</div></div><div class="bar"></div></div>`;
});

/* ---------- data ---------- */
define('field-row', `:host{display:block;height:24px;padding-left:18px}
label{display:flex;align-items:center;height:24px;white-space:nowrap}
.e{width:20px;display:flex;padding-left:6px}
input{appearance:none;width:12px;height:12px;border:1px solid #797775;border-radius:2px;margin:0 8px 0 0;flex:none}
input:checked{border-color:#117865;background:#117865 url("data:image/svg+xml,%3Csvg xmlns='http://www.w3.org/2000/svg' viewBox='0 0 10 10'%3E%3Cpath d='M1.500 5L4 7.500 8.500 2.500' fill='none' stroke='white' stroke-width='1.300'/%3E%3C/svg%3E") center/10px no-repeat}
.k{width:18px;display:flex}`,
el => `<label><span class="e">${el.hasAttribute('open') ? '<pbi-icon name="chevr"></pbi-icon>' : ''}</span><input type="checkbox" ${el.hasAttribute('checked') ? 'checked' : ''}><span class="k">${attr(el, 'kind') ? `<pbi-icon name="${attr(el, 'kind')}"></pbi-icon>` : ''}</span><slot></slot></label>`);
define('data-pane', `
:host{display:flex;flex-direction:column;width:180px;flex:none;overflow:hidden}
pane-head{margin:8px 8px 0}
.search{display:flex;align-items:center;height:27px;border:1px solid #797775;border-radius:2px;margin:15px 4px 8px;padding-left:7px;gap:6px;flex:none}
.search input{border:0;outline:0;flex:1;min-width:0;background:none;font-size:13px}.search input::placeholder{color:#484644;opacity:1}
.scroll{display:flex;flex:1;min-height:0;overflow:hidden;margin:0 4px 6px 0}
.tree{flex:1;min-width:0}
.root{display:flex;align-items:center;height:26px;padding:2px 0 0 7px}
.ic{position:relative;display:flex;margin:0 6px 0 4px;width:12px}
.ic .ok{position:absolute;left:6px;top:5px}
.bar{width:8px;height:344px;background:#c8c6c4;flex:none}`,
() => `<pane-head>Data</pane-head><label class="search"><pbi-icon name="mag"></pbi-icon><input type="text" placeholder="Search" aria-label="Search data"></label>
<div class="scroll"><div class="tree"><div class="root"><pbi-icon name="chevl"></pbi-icon><span class="ic"><pbi-icon name="grid"></pbi-icon><pbi-icon class="ok" name="okdot"></pbi-icon></span>Orders</div>` +
[['Category', 'checked'], ['City'], ['Country'], ['Customer ID'], ['Customer Name'], ['Discount', 'kind="sigma"'], ['Market'], ['Order Date', 'open kind="cal"'], ['Order ID'], ['Order Priority'], ['Postal Code', 'kind="sigma"'], ['Product ID'], ['Product Name'], ['Profit', 'kind="sigma"'], ['Quantity', 'kind="sigma"'], ['Region'], ['Row ID', 'kind="sigma"'], ['Sales', 'kind="sigma"']]
  .map(([n, a = '']) => `<field-row ${a}>${n}</field-row>`).join('') + `</div><div class="bar"></div></div>`);

/* ---------- status bar ---------- */
define('status-bar', `
:host{display:flex;align-items:center;height:25px;border-top:1px solid #e1dfdd;border-bottom:1px solid #000;padding:2px 4px 0;flex:none;color:#484644;white-space:nowrap;box-sizing:border-box}
.zoom{display:flex;align-items:center;margin-left:auto}
.zoom input{appearance:none;width:100px;height:12px;margin:0 6px;background:linear-gradient(#605e5c,#605e5c) 50px 50%/1px 5px no-repeat,linear-gradient(#605e5c,#605e5c) 0 50%/100% 1px no-repeat}
.zoom input::-webkit-slider-thumb{appearance:none;width:4px;height:12px;background:#605e5c}
.pct{margin:0 18px 0 13px}.upd{margin-left:14px}`,
`<span>Page 1 of 1</span><div class="zoom"><button aria-label="Zoom out">-</button><input type="range" min="0" max="100" value="28" aria-label="Zoom"><button aria-label="Zoom in">+</button><span class="pct">60%</span><button aria-label="Fit to page"><pbi-icon name="fit"></pbi-icon></button><a class="upd" href="#update">Update available (click to download)</a></div>`);

/* ---------- taskbar ---------- */
define('task-app', `:host{display:block;width:49px;height:40px;flex:none;position:relative}
:host([hover]){background:rgba(255,255,255,.35)}:host([active]){background:rgba(255,255,255,.6)}
button{width:100%;height:40px;justify-content:center}
:host([run]) button{border-bottom:3px solid #0078d7;padding-top:3px}
:host([run]:not([active])) button{width:41px;margin:0 4px}
.tip{position:absolute;left:0;top:-20px;width:49px;height:20px;border:1px solid #605e5c;background:#fff;color:#575757;text-align:center;line-height:18px;box-shadow:3px 3px 3px rgba(0,0,0,.45)}`,
el => `<button aria-label="${attr(el, 'label')}"><pbi-icon name="${attr(el, 'icon')}"></pbi-icon></button>${el.hasAttribute('hover') ? `<span class="tip" role="tooltip">${attr(el, 'label')}</span>` : ''}`);
define('task-bar', `
:host{display:flex;align-items:center;height:40px;flex:none;color:#000;background:linear-gradient(90deg,#cbe3ec,#d0e6ef 55%,#cfdfec 68%,#d6dcea 85%,#dadcea);white-space:nowrap}
.start{width:48px;height:40px;justify-content:center}
.search{display:flex;align-items:center;gap:11px;width:287px;height:40px;background:#fff;border:2px solid #b3b3b3;padding-left:10px;margin-right:1px;flex:none}
.search input{border:0;outline:0;flex:1;min-width:0;font-size:15px;padding:0}.search input::placeholder{color:#323130;opacity:1}
.tray{display:flex;align-items:center;margin-left:auto;padding-right:4px}
.weather{display:flex;align-items:center;gap:7px;font-size:14px;margin-right:18px}
.ic{width:32px;display:flex;justify-content:center}.ic.wide{width:40px}
.clock{width:66px;text-align:center;line-height:18px;margin:0 15px 0 9px}
.lang{margin-left:5px;width:24px}
.note{position:relative;display:flex;margin-right:11px}.note b{position:absolute;left:12px;top:8px;width:8px;text-align:center;font-weight:500}
.edge{width:1px;height:40px;background:#a8b0bc}`,
`<button class="start" aria-label="Start"><pbi-icon name="win"></pbi-icon></button>
<label class="search"><pbi-icon name="mag"></pbi-icon><input type="text" placeholder="Type here to search" aria-label="Type here to search"></label>
<task-app icon="tview" label="Task View"></task-app><task-app icon="edge" label="Edge"></task-app><task-app icon="files" label="File Explorer" run></task-app><task-app icon="mail" label="Mail"></task-app><task-app icon="firefox" label="Firefox" hover></task-app><task-app icon="pbi" label="Power BI Desktop" active run></task-app>
<div class="tray"><div class="weather"><pbi-icon name="sun"></pbi-icon><span>27°C</span><span>Mostly sunny</span></div>
<span class="ic"><pbi-icon name="tup"></pbi-icon></span><span class="ic"><pbi-icon name="cam"></pbi-icon></span><span class="ic"><pbi-icon name="sync"></pbi-icon></span><span class="ic"><pbi-icon name="batt"></pbi-icon></span><span class="ic"><pbi-icon name="globe"></pbi-icon></span><span class="ic"><pbi-icon name="vol"></pbi-icon></span><span class="ic wide"><pbi-icon name="pen"></pbi-icon></span>
<span class="lang">ENG</span><div class="clock">03:28<br>25-01-2024</div><span class="note"><pbi-icon name="note"></pbi-icon><b>1</b></span><span class="edge"></span></div>`);

/* ---------- shell ---------- */
define('pbi-app', `
:host{display:flex;flex-direction:column;height:100vh}
main{display:flex;flex:1;min-height:0}.mid{display:flex;flex-direction:column;flex:1;min-width:0}.row{display:flex;flex:1;min-height:0}`,
`<title-bar></title-bar>
<ribbon-tabs>${[['File', 64], ['Home', 70, 'on'], ['Insert', 65], ['Modeling', 91], ['View', 62], ['Optimize', 87], ['Help', 60], ['Format', 75, 'extra'], ['Data / Drill', 100, 'extra']].map(([n, w, x = '']) => `<ribbon-tab style="--w:${w}px" ${x}>${n}</ribbon-tab>`).join('')}</ribbon-tabs>
<ribbon-bar></ribbon-bar>
<main><nav-rail></nav-rail><div class="mid"><div class="row"><report-canvas></report-canvas><filters-pane></filters-pane></div><page-tabs></page-tabs></div><visuals-pane></visuals-pane><data-pane></data-pane></main>
<status-bar></status-bar><task-bar></task-bar>`);
</script>
</body>
</html>
